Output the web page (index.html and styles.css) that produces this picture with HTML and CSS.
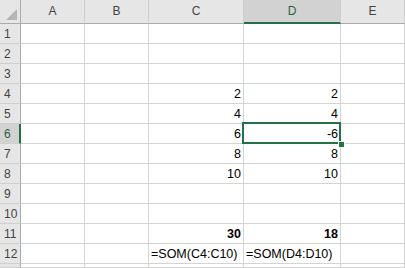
FILE: index.html
```html
<!DOCTYPE html>
<html>
<head>
<meta charset="utf-8">
<link rel="stylesheet" href="styles.css">
</head>
<body>
<div class="sheet">
  <div class="corner"><span class="tri"></span></div>
  <div class="ch">A</div>
  <div class="ch">B</div>
  <div class="ch">C</div>
  <div class="ch sel">D</div>
  <div class="ch">E</div>

  <div class="rh">1</div><div class="c"></div><div class="c"></div><div class="c"></div><div class="c"></div><div class="c"></div>
  <div class="rh">2</div><div class="c"></div><div class="c"></div><div class="c"></div><div class="c"></div><div class="c"></div>
  <div class="rh">3</div><div class="c"></div><div class="c"></div><div class="c"></div><div class="c"></div><div class="c"></div>
  <div class="rh">4</div><div class="c"></div><div class="c"></div><div class="c num">2</div><div class="c num">2</div><div class="c"></div>
  <div class="rh">5</div><div class="c"></div><div class="c"></div><div class="c num">4</div><div class="c num">4</div><div class="c"></div>
  <div class="rh sel">6</div><div class="c"></div><div class="c"></div><div class="c num">6</div><div class="c num active">-6</div><div class="c"></div>
  <div class="rh">7</div><div class="c"></div><div class="c"></div><div class="c num">8</div><div class="c num">8</div><div class="c"></div>
  <div class="rh">8</div><div class="c"></div><div class="c"></div><div class="c num">10</div><div class="c num">10</div><div class="c"></div>
  <div class="rh">9</div><div class="c"></div><div class="c"></div><div class="c"></div><div class="c"></div><div class="c"></div>
  <div class="rh">10</div><div class="c"></div><div class="c"></div><div class="c"></div><div class="c"></div><div class="c"></div>
  <div class="rh">11</div><div class="c"></div><div class="c"></div><div class="c num bold">30</div><div class="c num bold">18</div><div class="c"></div>
  <div class="rh">12</div><div class="c"></div><div class="c"></div><div class="c txt">=SOM(C4:C10)</div><div class="c txt">=SOM(D4:D10)</div><div class="c"></div>
  <div class="rh"></div><div class="c"></div><div class="c"></div><div class="c"></div><div class="c"></div><div class="c"></div>
</div>
</body>
</html>
```
FILE: styles.css
```css
html, body {
  margin: 0;
  padding: 0;
  background: #ffffff;
  overflow: hidden;
}
.sheet {
  display: grid;
  grid-template-columns: 21px 64px 64px 95px 97px 1fr;
  grid-template-rows: 24px repeat(12, 20px) 4px;
  width: 405px;
  font-family: "Liberation Sans", Arial, sans-serif;
}
.sheet > div {
  box-sizing: border-box;
}
.corner {
  background: #e6e6e6;
  border-right: 1px solid #ababab;
  border-bottom: 1px solid #ababab;
  position: relative;
}
.tri {
  position: absolute;
  right: 3px;
  bottom: 3px;
  width: 0;
  height: 0;
  border-left: 11px solid transparent;
  border-bottom: 11px solid #b5b5b5;
}
.ch {
  background: #e6e6e6;
  border-right: 1px solid #cfcfcf;
  border-bottom: 1px solid #ababab;
  color: #444444;
  font-size: 12px;
  display: flex;
  align-items: center;
  justify-content: center;
  padding-bottom: 2px;
}
.ch.sel {
  background: #d2d2d2;
  border-bottom: 2px solid #217346;
  color: #2f5e45;
  padding-bottom: 1px;
}
.rh {
  background: #e6e6e6;
  border-right: 1px solid #ababab;
  border-bottom: 1px solid #cfcfcf;
  color: #444444;
  font-size: 12px;
  display: flex;
  align-items: center;
  padding-left: 4px;
}
.rh.sel {
  background: #d2d2d2;
  border-right: 2px solid #217346;
  color: #2f5e45;
}
.c {
  border-right: 1px solid #d4d4d4;
  border-bottom: 1px solid #d4d4d4;
  color: #000000;
  font-size: 12.5px;
  line-height: 14px;
  display: flex;
  align-items: flex-end;
  padding-bottom: 2px;
  white-space: nowrap;
}
.num {
  justify-content: flex-end;
  padding-right: 2px;
}
.txt {
  padding-left: 2px;
}
.bold {
  font-weight: bold;
}
.active {
  position: relative;
}
.active::before {
  content: "";
  position: absolute;
  left: -2px;
  top: -2px;
  right: -1px;
  bottom: -1px;
  border: 2px solid #217346;
}
.active::after {
  content: "";
  position: absolute;
  right: -4px;
  bottom: -4px;
  width: 5px;
  height: 5px;
  background: #217346;
  box-shadow: 0 0 0 1px #ffffff;
}
```
